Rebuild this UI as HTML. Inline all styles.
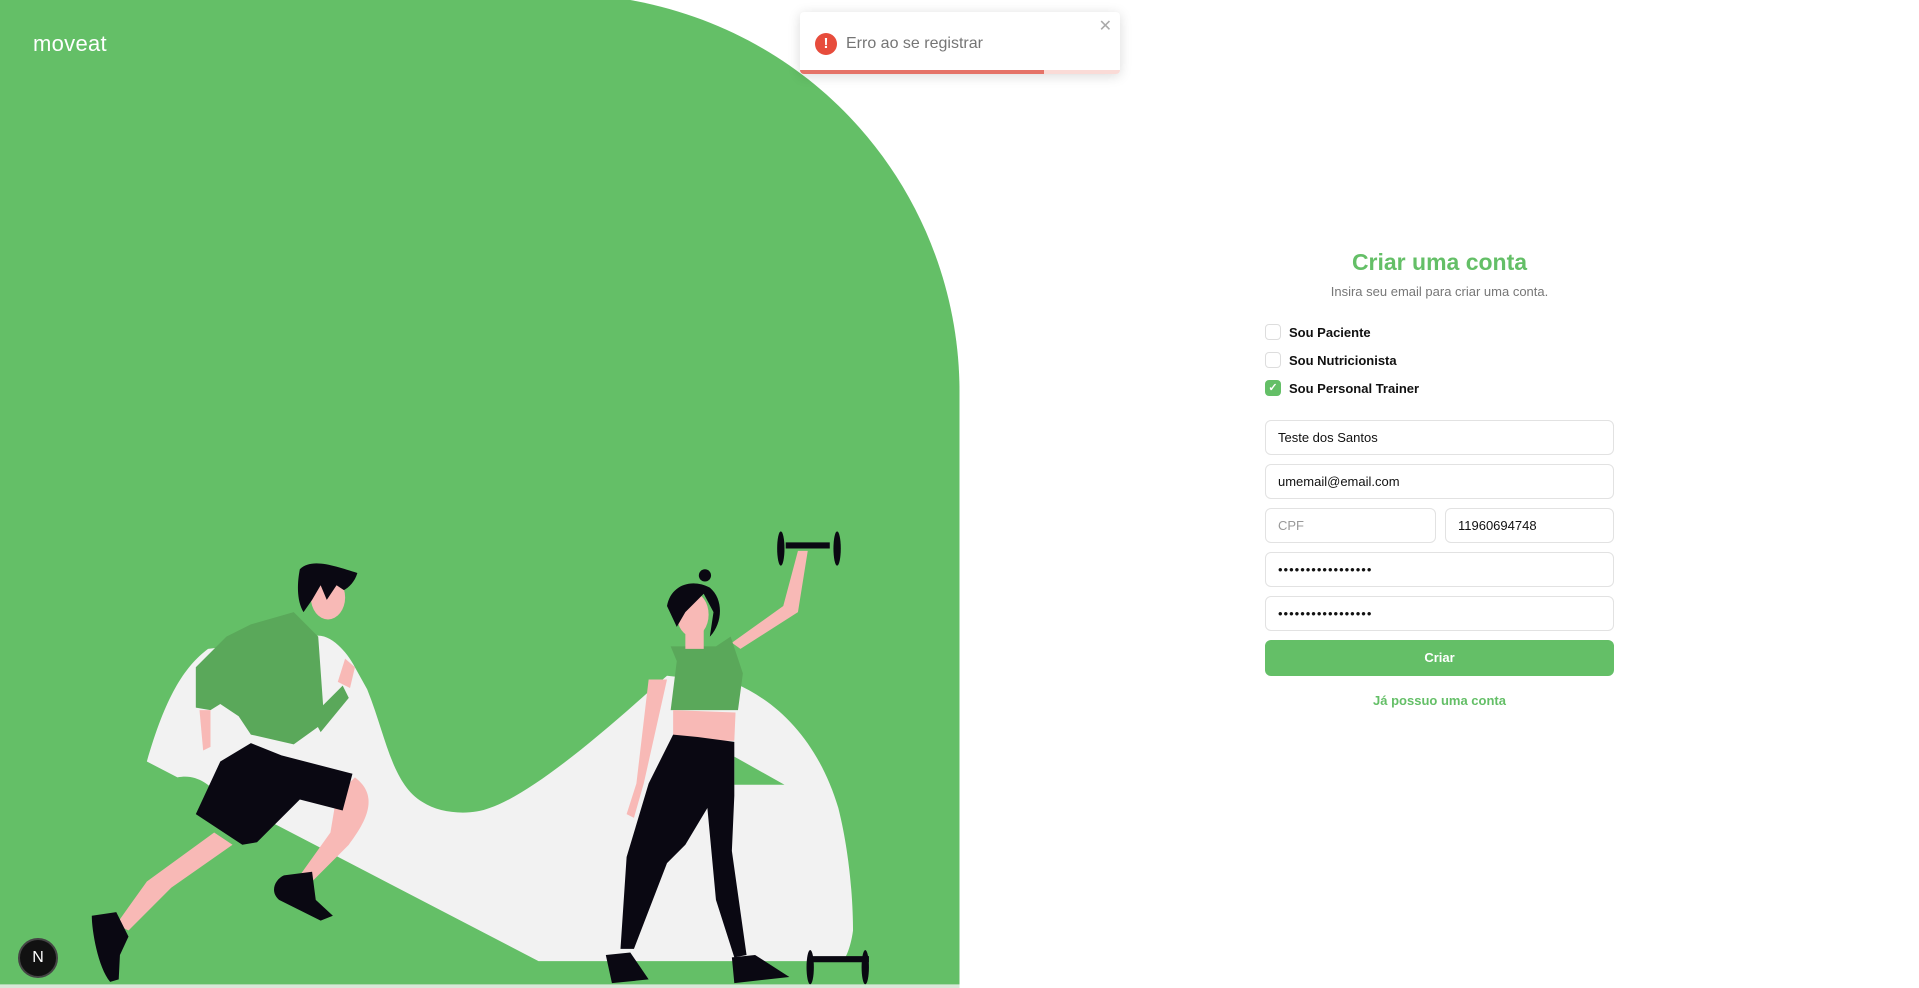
<!DOCTYPE html>
<html><head><meta charset="utf-8"><style>
*{box-sizing:border-box;margin:0;padding:0}
body{width:1919px;height:988px;overflow:hidden;background:#fff;font-family:"Liberation Sans",sans-serif;position:relative}
svg.bg{position:absolute;left:0;top:0;width:1919px;height:988px}
.logo{position:absolute;left:33px;top:31px;color:#fff;font-size:22px;letter-spacing:0.3px}
.toast{position:absolute;left:800px;top:12px;width:320px;height:62px;background:#fff;border-radius:4px;box-shadow:0 2px 12px rgba(0,0,0,.15);overflow:hidden}
.toast .ic{position:absolute;left:15px;top:21px;width:22px;height:22px;border-radius:50%;background:#e74c3c;color:#fff;font-weight:bold;font-size:15px;text-align:center;line-height:22px}
.toast .t{position:absolute;left:46px;top:23px;font-size:16px;color:#757575}
.toast .x{position:absolute;right:8px;top:4px;color:#aaa;font-size:16px}
.toast .bar{position:absolute;left:0;bottom:0;height:4px;width:100%;background:#fadbd7}
.toast .bar i{display:block;height:4px;width:244px;background:#e57368}
.form{position:absolute;left:1265px;top:244px;width:349px}
h1{font-size:23px;color:#64bf67;text-align:center;font-weight:bold;line-height:36px}
.sub{font-size:13px;color:#777;text-align:center;margin-top:4px}
.cb{display:flex;align-items:center;height:28px;font-size:13px;font-weight:bold;color:#111}
.cb span{width:16px;height:16px;border:1px solid #ddd;border-radius:4px;margin-right:8px;display:inline-block}
.cb span.on{background:#64bf67;border-color:#64bf67;color:#fff;font-size:11px;text-align:center;line-height:15px}
.in{height:35px;border:1px solid #e2e2e2;border-radius:6px;font-size:13px;color:#111;padding:0 12px;line-height:33px;margin-bottom:9px}
.btn{height:36px;border-radius:6px;background:#64bf67;color:#fff;font-weight:bold;font-size:13px;text-align:center;line-height:36px}
.link{color:#64bf67;font-weight:bold;font-size:13px;text-align:center;margin-top:17px}
.nb{position:absolute;left:18px;top:938px;width:40px;height:40px;border-radius:50%;background:#111;border:2px solid #444;color:#fff;text-align:center;line-height:36px;font-size:16px}
</style></head><body>
<svg class="bg" viewBox="0 0 1568 807" preserveAspectRatio="none">
<path d="M0,0 L515,0 C680,30 784,170 784,320 L784,805 L0,805 Z" fill="#64bf67"/>
<path d="M120,622 C135,570 150,545 170,530 L255,520 C270,515 285,535 290,545 L300,563 C315,600 320,640 345,655 C360,665 385,666 400,660 C430,650 480,610 530,565 L545,552 L600,558 C640,575 670,610 685,660 C695,700 697,740 697,760 C695,775 690,785 688,785 L440,785 L180,650 C170,640 160,632 145,635 Z" fill="#f2f2f2"/>
<path d="M600,618 L641,641 L600,641 Z" fill="#64bf67"/>
<path d="M175,680 L120,720 L95,755 L105,760 L140,725 L190,690 Z" fill="#f8b9b6"/>
<path d="M290,635 C310,650 300,670 285,690 L255,720 L245,715 L270,680 L275,650 Z" fill="#f8b9b6"/>
<path d="M75,748 L95,745 L105,765 L98,780 L97,800 L90,802 C80,790 75,760 75,748 Z" fill="#0a0812"/>
<path d="M232,715 L255,712 L258,735 L272,748 L262,752 L228,735 C220,728 225,718 232,715 Z" fill="#0a0812"/>
<path d="M180,622 L205,607 L230,617 L288,632 L280,662 L245,653 L210,688 L198,690 L160,665 Z" fill="#0a0812"/>
<path d="M160,545 L185,520 L205,510 L240,500 L260,520 L265,590 L240,608 L205,600 L195,585 L180,575 L172,580 L160,578 Z" fill="#5aa85a"/>
<path d="M255,585 L280,560 L285,570 L262,598 Z" fill="#5aa85a"/>
<path d="M163,580 L172,580 L172,610 L166,613 Z" fill="#f8b9b6"/>
<path d="M276,557 L282,538 L290,545 L286,562 Z" fill="#f8b9b6"/>
<ellipse cx="268" cy="488" rx="14" ry="18" fill="#f8b9b6"/>
<path d="M245,465 C255,455 275,463 292,468 C290,475 285,480 281,482 L275,478 L267,490 L262,478 L255,490 L248,500 C242,490 243,475 245,465 Z" fill="#0a0812"/>
<path d="M660,450 L652,500 L605,530 L598,525 L640,495 L652,450 Z" fill="#f8b9b6"/>
<path d="M530,555 L520,640 L512,665 L518,668 L526,640 L545,555 Z" fill="#f8b9b6"/>
<path d="M642,443 L678,443 L678,448 L642,448 Z" fill="#0a0812"/>
<ellipse cx="638" cy="448" rx="3" ry="14" fill="#0a0812"/><ellipse cx="684" cy="448" rx="3" ry="14" fill="#0a0812"/>
<path d="M660,781 L710,781 L710,786 L660,786 Z" fill="#0a0812"/>
<ellipse cx="662" cy="790" rx="3" ry="14" fill="#0a0812"/><ellipse cx="707" cy="790" rx="3" ry="14" fill="#0a0812"/>
<path d="M553,540 L548,528 L585,528 L597,520 L607,550 L603,580 L548,580 Z" fill="#5aa85a"/>
<path d="M550,580 L601,582 L600,605 L550,605 Z" fill="#f8b9b6"/>
<path d="M550,600 L570,602 L600,606 L600,650 L598,695 L610,780 L600,782 L585,735 L578,660 L560,690 L545,705 L518,775 L507,775 L512,700 L530,640 Z" fill="#0a0812"/>
<path d="M495,780 L515,778 L530,800 L500,803 Z M598,782 L617,780 L645,798 L600,803 Z" fill="#0a0812"/>
<ellipse cx="566" cy="502" rx="13" ry="18" fill="#f8b9b6"/>
<path d="M560,513 L575,513 L575,530 L560,530 Z" fill="#f8b9b6"/>
<path d="M545,495 C548,478 565,472 580,480 C592,490 590,510 580,520 L583,500 L575,485 L560,500 L553,512 Z" fill="#0a0812"/>
<circle cx="576" cy="470" r="5" fill="#0a0812"/>
<path d="M0,804 L784,804 L784,807 L0,807 Z" fill="#d8e8d8"/>
</svg>
<div class="logo">moveat</div>
<div class="toast"><div class="ic">!</div><div class="t">Erro ao se registrar</div><div class="x">✕</div><div class="bar"><i></i></div></div>
<div class="form">
<h1>Criar uma conta</h1>
<div class="sub">Insira seu email para criar uma conta.</div>
<div style="margin-top:19px">
<div class="cb"><span></span>Sou Paciente</div>
<div class="cb"><span></span>Sou Nutricionista</div>
<div class="cb"><span class="on">✓</span>Sou Personal Trainer</div>
</div>
<div style="margin-top:18px">
<div class="in">Teste dos Santos</div>
<div class="in">umemail@email.com</div>
<div style="display:flex;gap:9px"><div class="in" style="width:171px;color:#999">CPF</div><div class="in" style="flex:1">11960694748</div></div>
<div class="in" style="letter-spacing:1px">•••••••••••••••••</div>
<div class="in" style="letter-spacing:1px">•••••••••••••••••</div>
<div class="btn">Criar</div>
<div class="link">Já possuo uma conta</div>
</div>
</div>
<div class="nb">N</div>
</body></html>
